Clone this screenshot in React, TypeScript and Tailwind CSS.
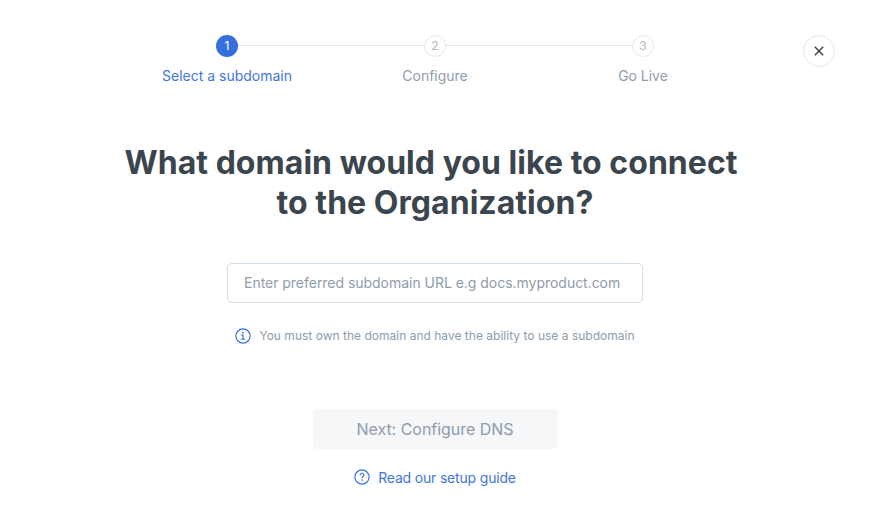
import React from "react";

const steps = [
  { n: 1, label: "Select a subdomain", active: true },
  { n: 2, label: "Configure", active: false },
  { n: 3, label: "Go Live", active: false },
];

export default function App() {
  return (
    <div className="flex h-[525px] w-[870px] items-start justify-between overflow-hidden bg-white pr-[35px] pl-[35px] font-['Inter',sans-serif] font-normal text-[#8d9dab]">
      <div className="w-8 shrink-0" />
      <main className="flex w-[660px] flex-col items-center pt-[35px]">
        <ol className="grid w-[624px] grid-cols-3">
          {steps.map((s) => (
            <li key={s.n} className="flex flex-col items-center">
              <div className="flex w-full items-center">
                <div className={s.n === 1 ? "mb-px h-px flex-1" : "mb-px h-px flex-1 bg-[#dfe7ee]"} />
                <div className={s.active ? "flex size-[22px] items-center justify-center rounded-full bg-[#366fd9] text-xs text-white" : "flex size-[22px] items-center justify-center rounded-full border border-[#e3eaf0] text-xs text-[#b3b9be]"}>{s.n}</div>
                <div className={s.n === 3 ? "mb-px h-px flex-1" : "mb-px h-px flex-1 bg-[#dfe7ee]"} />
              </div>
              <span className={s.active ? "mt-2 text-sm leading-[22px] text-[#3f76dd]" : "mt-2 text-sm leading-[22px] tracking-[-0.03px]"}>{s.label}</span>
            </li>
          ))}
        </ol>
        <h1 className="mt-[56px] text-center text-[32px] leading-10 font-bold tracking-[0.04px] text-[#3b454e]">
          <span className="block pr-[8px]">What domain would you like to connect</span>
          <span className="block">to the Organization?</span>
        </h1>
        <input aria-label="Subdomain" placeholder="Enter preferred subdomain URL e.g docs.myproduct.com" className="mt-10 h-10 w-[416px] rounded-[5px] border border-[#d0dce6] px-4 pb-0.5 text-sm tracking-[-0.03px] outline-none placeholder:text-[#8d9dab]" />
        <div className="mt-6 flex h-[18px] items-center gap-2 text-xs">
          <svg className="size-4" viewBox="0 0 16 16" fill="none" stroke="#346ddb" strokeWidth="1.15"><circle cx="8" cy="8" r="7.1" /><path d="M6.2 7H8v4.2M5.8 11.2h4.4" /><circle cx="7.8" cy="4.7" r=".9" fill="#346ddb" stroke="none" /></svg>
          <span className="tracking-[0.012px]">You must own the domain and have the ability to use a subdomain</span>
        </div>
        <button className="mt-16 h-10 w-[245px] rounded-[4px] bg-[#f5f7f9] text-base tracking-[-0.03px]">Next: Configure DNS</button>
        <a className="mt-[18px] flex h-[22px] items-center gap-2 text-sm tracking-[-0.18px] text-[#3f76dd]">
          <svg className="mb-0.5 size-4" viewBox="0 0 16 16" fill="none" stroke="#346ddb" strokeWidth="1.15"><circle cx="8" cy="8" r="7.1" /><path d="M6.1 6.3a1.9 1.9 0 1 1 2.8 1.5c-.6.4-.9.7-.9 1.4" /><circle cx="8" cy="11.1" r=".8" fill="#346ddb" stroke="none" /></svg>
          <span>Read our setup guide</span>
        </a>
      </main>
      <button aria-label="Close" className="mt-[35px] flex size-8 shrink-0 items-center justify-center rounded-full border border-[#e3e8ef]">
        <svg className="size-4" viewBox="0 0 16 16" fill="none" stroke="#404040" strokeWidth="1.4"><path d="m3.8 3.8 8.4 8.4M12.2 3.8l-8.4 8.4" /></svg>
      </button>
    </div>
  );
}
